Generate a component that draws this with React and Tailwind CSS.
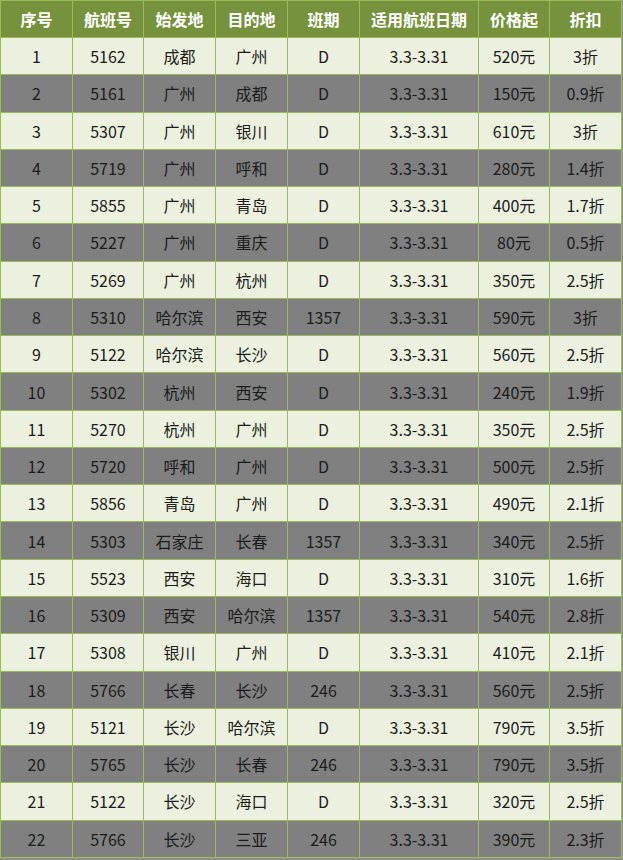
const headers = ["序号", "航班号", "始发地", "目的地", "班期", "适用航班日期", "价格起", "折扣"];

const rows = [
  ["1", "5162", "成都", "广州", "D", "520元", "3折"],
  ["2", "5161", "广州", "成都", "D", "150元", "0.9折"],
  ["3", "5307", "广州", "银川", "D", "610元", "3折"],
  ["4", "5719", "广州", "呼和", "D", "280元", "1.4折"],
  ["5", "5855", "广州", "青岛", "D", "400元", "1.7折"],
  ["6", "5227", "广州", "重庆", "D", "80元", "0.5折"],
  ["7", "5269", "广州", "杭州", "D", "350元", "2.5折"],
  ["8", "5310", "哈尔滨", "西安", "1357", "590元", "3折"],
  ["9", "5122", "哈尔滨", "长沙", "D", "560元", "2.5折"],
  ["10", "5302", "杭州", "西安", "D", "240元", "1.9折"],
  ["11", "5270", "杭州", "广州", "D", "350元", "2.5折"],
  ["12", "5720", "呼和", "广州", "D", "500元", "2.5折"],
  ["13", "5856", "青岛", "广州", "D", "490元", "2.1折"],
  ["14", "5303", "石家庄", "长春", "1357", "340元", "2.5折"],
  ["15", "5523", "西安", "海口", "D", "310元", "1.6折"],
  ["16", "5309", "西安", "哈尔滨", "1357", "540元", "2.8折"],
  ["17", "5308", "银川", "广州", "D", "410元", "2.1折"],
  ["18", "5766", "长春", "长沙", "246", "560元", "2.5折"],
  ["19", "5121", "长沙", "哈尔滨", "D", "790元", "3.5折"],
  ["20", "5765", "长沙", "长春", "246", "790元", "3.5折"],
  ["21", "5122", "长沙", "海口", "D", "320元", "2.5折"],
  ["22", "5766", "长沙", "三亚", "246", "390元", "2.3折"],
];

const cols = "grid grid-cols-[72px_71px_72px_72px_72px_119px_71px_72px]";

const App = () => {
  return (
    <div
      className="w-[623px] min-h-[860px] bg-[#8c8c8c]"
      style={{ fontFamily: '"Noto Sans CJK SC", "Noto Sans", sans-serif' }}
    >
      <div className="w-[621px] border-l border-t border-[#9bbb59]">
        <div className={`${cols} h-[37px] bg-[#76923c]`}>
          {headers.map((h) => (
            <div
              key={h}
              className="flex items-center justify-center border-r border-b border-[#9bbb59] text-[16px] font-bold text-white"
            >
              {h}
            </div>
          ))}
        </div>
        {rows.map((r, i) => {
          const cells = [r[0], r[1], r[2], r[3], r[4], "3.3-3.31", r[5], r[6]];
          return (
            <div
              key={r[0]}
              className={`${cols} h-[37.27px] ${i % 2 === 0 ? "bg-[#ebf1de]" : "bg-[#808080]"}`}
            >
              {cells.map((c, j) => (
                <div
                  key={j}
                  className="flex items-center justify-center border-r border-b border-[#9bbb59] text-[16px] text-[#1c1c1c]"
                >
                  {c}
                </div>
              ))}
            </div>
          );
        })}
      </div>
    </div>
  );
};

export default App;
